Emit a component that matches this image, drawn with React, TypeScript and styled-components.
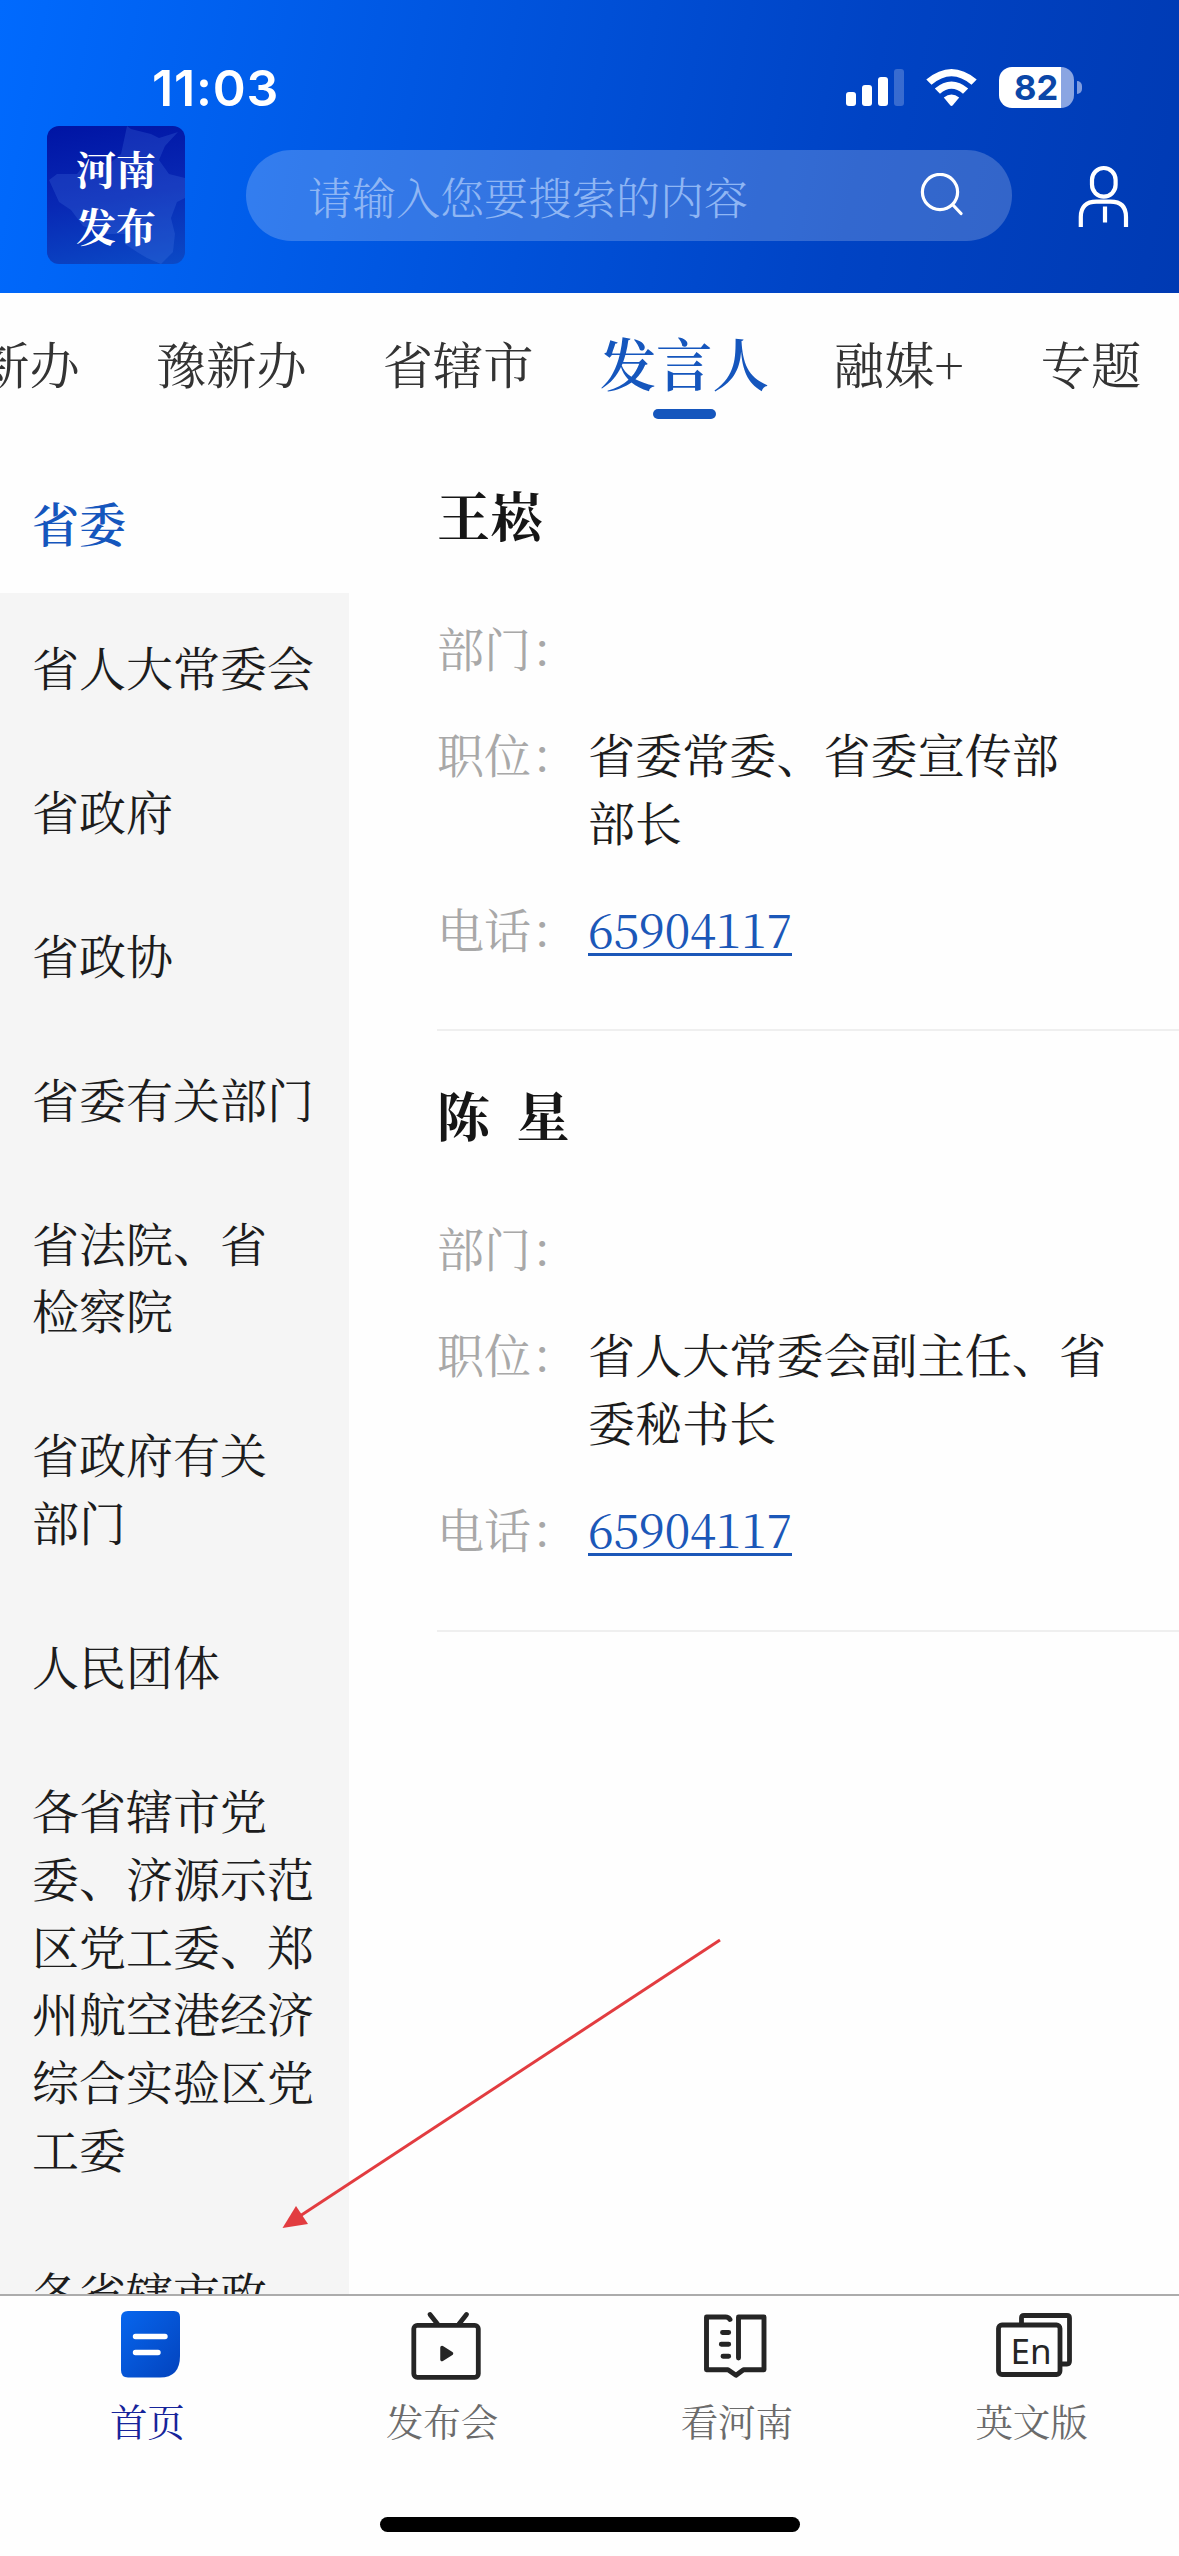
import React from "react";
import styled, { createGlobalStyle } from "styled-components";

const serif = `"Noto Serif CJK SC", "Source Han Serif SC", "Songti SC", "Noto Sans CJK SC", serif`;

const GlobalStyle = createGlobalStyle`
  * { box-sizing: border-box; }
  html, body { margin: 0; padding: 0; background: #fefefe; }
  body { font-family: ${serif}; color: #1c1c1c; }
`;

const Screen = styled.div`
  position: relative;
  width: 1179px;
  height: 2556px;
  overflow: hidden;
  display: flex;
  flex-direction: column;
  background: #fefefe;
`;

const Header = styled.header`
  flex: none;
  height: 293px;
  background: linear-gradient(101deg, #006afe 0%, #0053dc 42%, #0043c4 72%, #003ab3 100%);
`;

const StatusBar = styled.div`
  height: 126px;
  padding: 50px 97px 0 152px;
  display: flex;
  justify-content: space-between;
  align-items: flex-start;
`;

const Clock = styled.time`
  height: 76px;
  line-height: 76px;
  font-family: Inter, sans-serif;
  font-size: 50px;
  font-weight: 600;
  letter-spacing: 0.8px;
  color: #fff;
`;

const StatusIcons = styled.div`
  padding-top: 17px;
  display: flex;
  align-items: center;
`;

const Battery = styled.div`
  margin-left: 22px;
  display: flex;
  align-items: center;
  gap: 3px;
`;

const BatteryBody = styled.div`
  width: 75px;
  height: 41px;
  border-radius: 13px;
  padding-left: 15px;
  background: linear-gradient(90deg, #fff 62px, #8aa5e2 62px);
  font: 700 34.5px/41px Inter, sans-serif;
  color: #0b47a8;
`;

const BatteryNub = styled.div`
  width: 5px;
  height: 13px;
  border-radius: 0 5px 5px 0;
  background: #7f9cdf;
`;

const SearchRow = styled.div`
  padding: 0 50px 0 47px;
  display: flex;
  align-items: flex-start;
`;

const Logo = styled.div`
  width: 138px;
  height: 138px;
  border-radius: 12px;
  overflow: hidden;
  display: grid;
  background: linear-gradient(170deg, #0014a4 0%, #0828b4 50%, #0b4ac6 100%);
  > * { grid-area: 1 / 1; }
`;

const LogoText = styled.div`
  position: relative;
  padding: 14px 0 0 29px;
  font-size: 40px;
  line-height: 56.5px;
  font-weight: 700;
  color: #fff;
`;

const SearchBox = styled.div`
  width: 766px;
  height: 91px;
  margin: 24px 0 0 61px;
  padding: 0 49px 0 62px;
  border-radius: 46px;
  display: flex;
  align-items: center;
  justify-content: space-between;
  background: rgba(255, 255, 255, 0.2);
`;

const Placeholder = styled.span`
  font-size: 44px;
  line-height: 60px;
  font-weight: 300;
  color: #8fb6f4;
`;

const UserButton = styled.div`
  margin: 39px 0 0 65px;
  line-height: 0;
`;

const Tabs = styled.nav`
  flex: none;
  height: 156px;
  padding-top: 32.5px;
  display: flex;
  align-items: flex-start;
  margin-left: -71px;
  white-space: nowrap;
`;

const Tab = styled.div<{ $active?: boolean; $gap: number }>`
  flex: none;
  margin-right: ${(p) => p.$gap}px;
  display: flex;
  flex-direction: column;
  align-items: center;
  font-size: ${(p) => (p.$active ? 56.4 : 50.3)}px;
  line-height: 72px;
  font-weight: ${(p) => (p.$active ? 600 : 400)};
  color: ${(p) => (p.$active ? "#1556bd" : "#333")};
`;

const TabMark = styled.span`
  width: 63px;
  height: 10px;
  margin-top: 11.5px;
  border-radius: 5px;
  background: #1556bd;
`;

const Body = styled.main`
  flex: none;
  height: 1845px;
  display: flex;
  overflow: hidden;
`;

const Sidebar = styled.aside`
  flex: none;
  width: 349px;
  background: #f5f5f5;
`;

const SideItem = styled.div<{ $active?: boolean }>`
  padding: 38.6px 0 37.6px 32px;
  font-size: 47px;
  line-height: 67.8px;
  white-space: pre-line;
  font-weight: ${(p) => (p.$active ? 600 : 400)};
  color: ${(p) => (p.$active ? "#1556bd" : "#1c1c1c")};
  background: ${(p) => (p.$active ? "#fefefe" : "transparent")};
`;

const People = styled.section`
  flex: 1;
  padding-left: 88px;
`;

const Card = styled.article`
  height: 600.5px;
  padding-top: 45px;
  border-bottom: 2px solid #efefef;
  &:first-child { height: 582px; padding-top: 27px; }
`;

const Name = styled.h2`
  margin: 0 0 60.5px;
  font-size: 53px;
  line-height: 76px;
  font-weight: 700;
  white-space: pre;
  color: #161616;
`;

const Field = styled.div`
  display: flex;
  align-items: flex-start;
  margin-bottom: 38.7px;
  font-size: 47.1px;
  line-height: 68px;
`;

const Label = styled.span`
  width: 151px;
  flex: none;
  white-space: nowrap;
  color: #a8a8a8;
`;

const Value = styled.span`
  white-space: pre-line;
`;

const Phone = styled.a`
  height: 68px;
  font-size: 47px;
  letter-spacing: -0.35px;
  color: #1b57b8;
  text-decoration: underline;
  text-decoration-thickness: 3px;
  text-underline-offset: 5px;
`;

const BottomBar = styled.footer`
  flex: 1;
  border-top: 2px solid #acacac;
  background: #fefefe;
  display: flex;
  flex-direction: column;
  align-items: center;
`;

const BottomTabs = styled.div`
  width: 1179px;
  height: 221px;
  display: grid;
  grid-template-columns: repeat(4, 1fr);
`;

const BottomTab = styled.div<{ $active?: boolean }>`
  padding-top: 14px;
  display: flex;
  flex-direction: column;
  align-items: center;
  font-size: 37.5px;
  line-height: 54px;
  color: ${(p) => (p.$active ? "#16249a" : "#6b6b6b")};
`;

const IconSlot = styled.span<{ $indent: number }>`
  height: 68px;
  margin-bottom: 15px;
  line-height: 0;
  padding-left: ${(p) => Math.max(p.$indent, 0) * 2}px;
  padding-right: ${(p) => Math.max(-p.$indent, 0) * 2}px;
`;

const HomeIndicator = styled.div`
  width: 420px;
  height: 15px;
  border-radius: 8px;
  background: #000;
`;

const ArrowLayer = styled.svg`
  position: absolute;
  left: 270px;
  top: 1930px;
  pointer-events: none;
`;

const StatusGlyphs = () => (
  <svg width="131" height="38" viewBox="846 69 131 38" fill="#fff">
    <rect x="846" y="92" width="10" height="14" rx="3" />
    <rect x="862" y="85" width="10" height="21" rx="3" />
    <rect x="878" y="77" width="10" height="29" rx="3" />
    <rect x="894" y="69" width="10" height="37" rx="3" opacity=".22" />
    <path d="M926.3 79.5Q951.5 58.5 976.7 79.5L971.5 84.8Q951.5 67.8 931.5 84.8Z" />
    <path d="M934.8 88.5Q951.5 74.5 968.2 88.5L963 93.8Q951.5 83.8 940 93.8Z" />
    <path d="M943.8 97.5Q951.5 91.5 959.2 97.5L952.8 105.3Q951.5 106.8 950.2 105.3Z" />
  </svg>
);

const LogoMap = () => (
  <svg width="138" height="138" viewBox="0 0 138 138">
    <path
      d="M80 0L84 3L104 8L112 12L131 6L118 20L112 34L122 48L138 52V72L130 76L124 92L128 108L126 126L114 138L100 132L90 126L78 118L84 108L60 108L36 100L24 84L12 76L2 54L10 48L30 48L38 38L62 38L74 28Z"
      fill="#5a8af0"
      opacity=".2"
    />
  </svg>
);

const SearchIcon = () => (
  <svg width="43" height="45" viewBox="0 0 43 45" fill="none" stroke="#fff" strokeWidth="3.2" strokeLinecap="round">
    <circle cx="20" cy="19" r="17.6" />
    <path d="M33 32L41 40.5" />
  </svg>
);

const UserIcon = () => (
  <svg width="52" height="62" viewBox="0 0 52 62" fill="none" stroke="#fff" strokeWidth="4.2">
    <rect x="15" y="3" width="23.6" height="28.6" rx="11.8" />
    <path d="M3.8 62V52Q3.8 36.7 19.5 36.7H33.5Q49 36.7 49 52V62" />
    <path d="M28 41.5V57.5" />
  </svg>
);

const HomeIcon = () => (
  <svg width="70" height="68" viewBox="0 0 70 68">
    <defs>
      <linearGradient id="doc" x1="0" y1="0" x2="1" y2="1">
        <stop offset="0" stopColor="#0766ee" />
        <stop offset="1" stopColor="#0343bd" />
      </linearGradient>
    </defs>
    <path d="M13 1H59Q65 1 65 7V46Q65 67.5 45 67.5H13Q6 67.5 6 60V8Q6 1 13 1Z" fill="url(#doc)" />
    <path d="M20.5 26.5H50M20.5 42.5H43" stroke="#fff" strokeWidth="5.4" strokeLinecap="round" />
  </svg>
);

const TvIcon = () => (
  <svg width="70" height="70" viewBox="0 0 70 70" fill="none" stroke="#252525" strokeWidth="4.8" strokeLinecap="round">
    <rect x="2.8" y="15.3" width="64.5" height="52" rx="3.5" />
    <path d="M19 4.5L26.5 14M55.5 4.5L48 14" />
    <path d="M31 37.5L40.5 43.5L31 49.5Z" fill="#252525" strokeWidth="3.5" strokeLinejoin="round" />
  </svg>
);

const BookIcon = () => (
  <svg width="70" height="70" viewBox="0 0 70 70" fill="none" stroke="#252525" strokeWidth="4.9" strokeLinecap="round" strokeLinejoin="round">
    <path d="M30 9.5Q28.5 7 25.5 7H6.5V59.8H28L36 65.3L43.5 59.8H64V7H38.5V48" />
    <path d="M22.5 22.5H28.7M21.3 34.3H28.7M23 46.3H28.7" />
  </svg>
);

const EnIcon = () => (
  <svg width="76" height="68" viewBox="0 0 76 68" fill="none" stroke="#252525" strokeWidth="4.8">
    <rect x="2.5" y="15" width="61.5" height="49.5" rx="3.5" />
    <path d="M25.5 13V8Q25.5 5.500 28 5.500H71Q73.5 5.500 73.5 8V51Q73.5 54 71 54H65" />
    <text x="14.5" y="53.5" fill="#252525" stroke="none" fontFamily="Noto Sans, sans-serif" fontSize="35">En</text>
  </svg>
);

const tabs = [
  { label: "国新办", gap: 76 },
  { label: "豫新办", gap: 76 },
  { label: "省辖市", gap: 66 },
  { label: "发言人", gap: 65 },
  { label: "融媒+", gap: 77 },
  { label: "专题", gap: 77 },
];

const groups = [
  "省委",
  "省人大常委会",
  "省政府",
  "省政协",
  "省委有关部门",
  "省法院、省\n检察院",
  "省政府有关\n部门",
  "人民团体",
  "各省辖市党\n委、济源示范\n区党工委、郑\n州航空港经济\n综合实验区党\n工委",
  "各省辖市政",
];

const people = [
  { name: "王崧", post: "省委常委、省委宣传部\n部长", phone: "65904117" },
  { name: "陈  星", post: "省人大常委会副主任、省\n委秘书长", phone: "65904117" },
];

const bottom = [
  { label: "首页", icon: <HomeIcon />, indent: 2.5, active: true },
  { label: "发布会", icon: <TvIcon />, indent: 4 },
  { label: "看河南", icon: <BookIcon />, indent: -1.5 },
  { label: "英文版", icon: <EnIcon />, indent: 2.5 },
];

const activeTab = "发言人";

export default function App() {
  return (
    <>
      <GlobalStyle />
      <Screen>
        <Header>
          <StatusBar>
            <Clock>11:03</Clock>
            <StatusIcons>
              <StatusGlyphs />
              <Battery>
                <BatteryBody>82</BatteryBody>
                <BatteryNub />
              </Battery>
            </StatusIcons>
          </StatusBar>
          <SearchRow>
            <Logo>
              <LogoMap />
              <LogoText>河南<br />发布</LogoText>
            </Logo>
            <SearchBox>
              <Placeholder>请输入您要搜索的内容</Placeholder>
              <SearchIcon />
            </SearchBox>
            <UserButton><UserIcon /></UserButton>
          </SearchRow>
        </Header>
        <Tabs>
          {tabs.map((t) => (
            <Tab key={t.label} $active={t.label === activeTab} $gap={t.gap}>
              {t.label}
              {t.label === activeTab && <TabMark />}
            </Tab>
          ))}
        </Tabs>
        <Body>
          <Sidebar>
            {groups.map((g, i) => (
              <SideItem key={g} $active={i === 0}>{g}</SideItem>
            ))}
          </Sidebar>
          <People>
            {people.map((p) => (
              <Card key={p.name}>
                <Name>{p.name}</Name>
                <Field><Label>部门：</Label></Field>
                <Field><Label>职位：</Label><Value>{p.post}</Value></Field>
                <Field><Label>电话：</Label><Phone>{p.phone}</Phone></Field>
              </Card>
            ))}
          </People>
        </Body>
        <BottomBar>
          <BottomTabs>
            {bottom.map((b) => (
              <BottomTab key={b.label} $active={b.active}>
                <IconSlot $indent={b.indent}>{b.icon}</IconSlot>
                {b.label}
              </BottomTab>
            ))}
          </BottomTabs>
          <HomeIndicator />
        </BottomBar>
        <ArrowLayer width="460" height="310" viewBox="270 1930 460 310">
          <path d="M720 1940L300 2216" stroke="#e23c40" strokeWidth="3" />
          <path d="M282.5 2228L296 2206L308 2224Z" fill="#e23c40" />
        </ArrowLayer>
      </Screen>
    </>
  );
}
